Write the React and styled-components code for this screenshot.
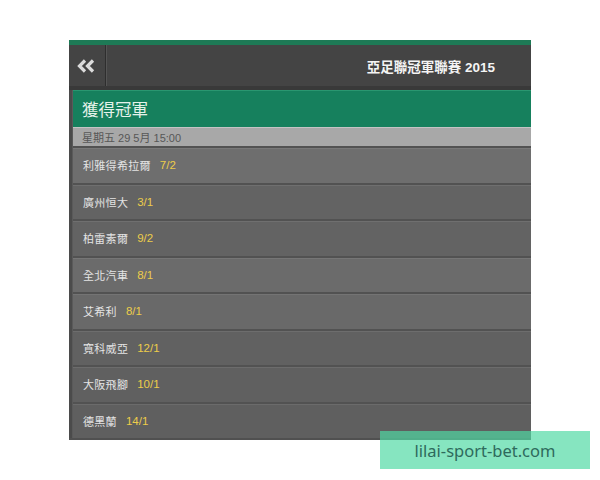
import React from 'react';
import styled, { createGlobalStyle } from 'styled-components'

const GlobalStyle = createGlobalStyle`
	body{
		margin: 0;
		background: #ffffff;
		font-family: "Liberation Sans", "Noto Sans CJK TC", sans-serif;
	}
`

const teams = [
	{ name: '利雅得希拉爾', odds: '7/2', shade: '#6e6e6e' },
	{ name: '廣州恒大', odds: '3/1', shade: '#636363' },
	{ name: '柏雷素爾', odds: '9/2', shade: '#636363' },
	{ name: '全北汽車', odds: '8/1', shade: '#6b6b6b' },
	{ name: '艾希利', odds: '8/1', shade: '#696969' },
	{ name: '寬科威亞', odds: '12/1', shade: '#616161' },
	{ name: '大阪飛腳', odds: '10/1', shade: '#606060' },
	{ name: '德黑蘭', odds: '14/1', shade: '#5f5f5f' },
]

const App = () => {
	return (
		<Page>
			<GlobalStyle />
			<Frame>
				<TopBar>
					<BackButton>
						<svg width="18" height="14" viewBox="0 0 18 14">
							<polyline points="8,1.5 2.5,7 8,12.5" fill="none" stroke="#dcdcdc" strokeWidth="3.2" />
							<polyline points="16,1.5 10.5,7 16,12.5" fill="none" stroke="#dcdcdc" strokeWidth="3.2" />
						</svg>
					</BackButton>
					<Title>亞足聯冠軍聯賽 2015</Title>
				</TopBar>
				<Card>
					<CardHead>獲得冠軍</CardHead>
					<DateBar>星期五 29 5月 15:00</DateBar>
					{
						teams.map((item, index) => {
							return (
								<Row key={index} shade={item.shade}>
									<Name>{item.name}</Name>
									<Odds>{item.odds}</Odds>
								</Row>
							)
						})
					}
				</Card>
			</Frame>
			<Watermark>lilai-sport-bet.com</Watermark>
		</Page>
	)
}

export default App

const Page = styled.div`
	position: relative;
	width: 600px;
	height: 480px;
	padding-top: 40px;
	box-sizing: border-box;
`
const Frame = styled.div`
	margin-left: 69px;
	width: 462px;
	background: #4b4b4b;
	border-top: 5px solid #1e7a56;
	border-bottom: 2px solid #505050;
`
const TopBar = styled.div`
	display: flex;
	align-items: center;
	height: 41px;
	background: #444444;
	border-bottom: 4px solid #393939;
`
const BackButton = styled.div`
	display: flex;
	align-items: center;
	justify-content: center;
	width: 37px;
	height: 100%;
	padding-right: 2px;
	box-sizing: border-box;
	border-right: 1px solid #2e2e2e;
	box-shadow: 1px 0 0 #555;
`
const Title = styled.div`
	flex: 1;
	text-align: right;
	padding-right: 36px;
	color: #f4f4f4;
	font-size: 13.5px;
	font-weight: bold;
`
const Card = styled.div`
	margin-left: 3px;
	border-left: 1px solid #5a5a5a;
`
const CardHead = styled.div`
	display: flex;
	align-items: center;
	height: 36px;
	padding-left: 9px;
	background: #16805d;
	border-top: 1px solid #2a9670;
	color: #e6f2ea;
	font-size: 16.5px;
	font-family: "Noto Sans CJK TC", sans-serif;
`
const DateBar = styled.div`
	display: flex;
	align-items: center;
	height: 19px;
	padding-left: 9px;
	background: #a8a8a8;
	border-top: 1px solid #c4c4c4;
	box-sizing: border-box;
	color: #575757;
	font-size: 11px;
`
const Row = styled.div`
	display: flex;
	align-items: center;
	gap: 9px;
	height: 36.5px;
	padding-left: 10px;
	box-sizing: border-box;
	background: ${props => props.shade};
	border-top: 2px solid #525252;
	box-shadow: inset 0 1px 0 rgba(255, 255, 255, 0.08);
	&:first-of-type{
		border-top-color: #5a5a5a;
	}
`
const Name = styled.span`
	color: #e4e4e4;
	font-size: 11px;
	letter-spacing: 0.3px;
	font-family: "Noto Sans CJK TC", sans-serif;
`
const Odds = styled.span`
	color: #eccd4a;
	font-size: 11.5px;
`
const Watermark = styled.div`
	position: absolute;
	left: 380px;
	top: 431px;
	width: 210px;
	height: 38px;
	display: flex;
	align-items: center;
	justify-content: center;
	background: rgba(80, 217, 164, 0.69);
	color: #2e6a5c;
	font-size: 16.5px;
	font-family: "Noto Sans", sans-serif;
`
